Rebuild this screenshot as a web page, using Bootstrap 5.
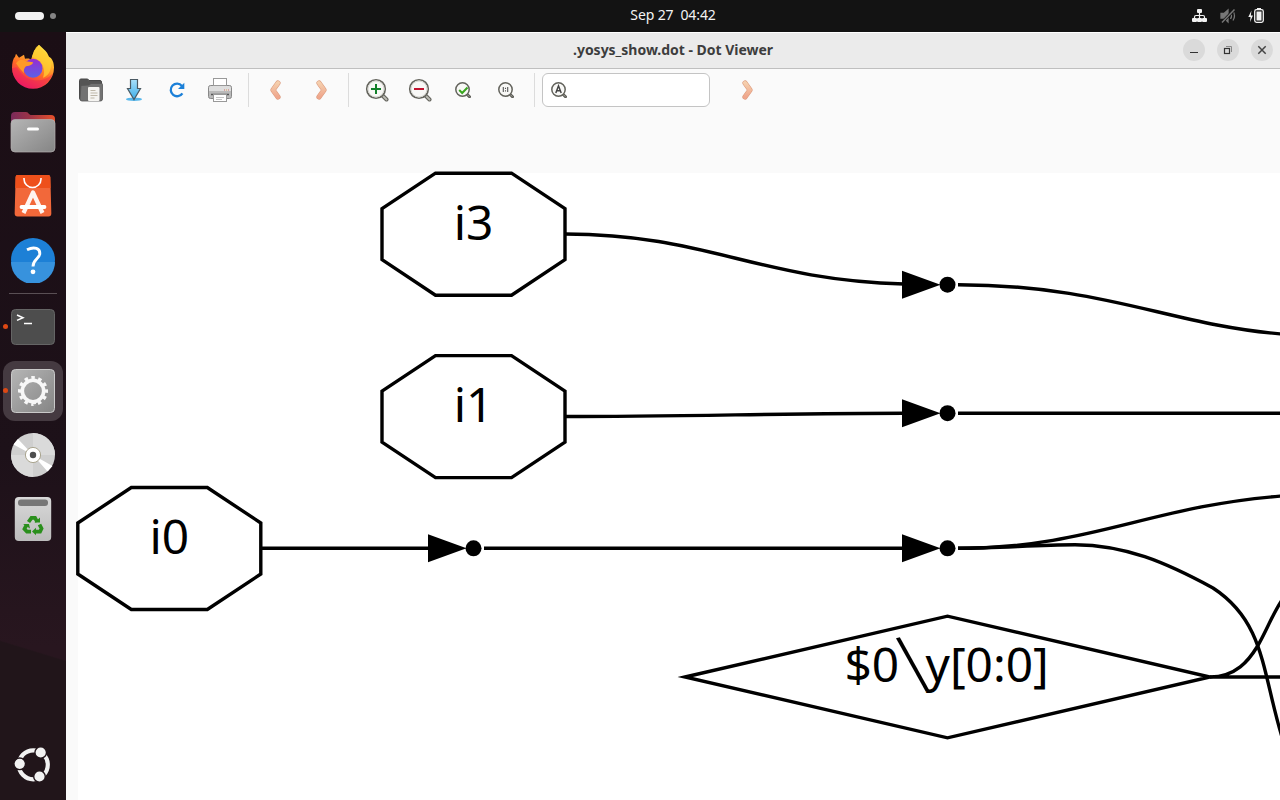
<!DOCTYPE html>
<html lang="en">
<head>
<meta charset="utf-8">
<title>.yosys_show.dot - Dot Viewer</title>
<link href="https://cdn.jsdelivr.net/npm/bootstrap@5.3.0/dist/css/bootstrap.min.css" rel="stylesheet">
<style>
body{font-family:"Noto Sans","Open Sans",sans-serif;background:#fafafa}
svg{display:block;flex:none}
.topbar{height:32px;background:#131313;color:#f2f2f2;flex:none;display:grid;grid-template-columns:1fr auto 1fr}
.workspaces{padding-left:15px;gap:6px}
.clock{font-size:14px;letter-spacing:-.12px;white-space:pre;transform:translateX(33px);line-height:30px;height:32px}
.pill{width:29px;height:8px;background:#f2f2f2}
.pip{width:6px;height:6px;background:#858585}
.dock{width:66px;flex:none;padding-top:4px;background:linear-gradient(197deg,transparent 0 79.7%,#21151a 79.9%),linear-gradient(#1b0e15,#1d1119 55%,#28161f 80%)}
.dock-item{width:66px;height:64px;flex:none;position:relative}
.dock-item.active-app::before{content:"";position:absolute;left:3px;top:2px;width:60px;height:60px;border-radius:12px;background:#453a41}
.dock-item svg{position:relative}
.dock-item.running::after{content:"";position:absolute;left:3px;top:29px;width:5px;height:5px;border-radius:50%;background:#dd4814}
.dock-rule{height:3px;flex:none;margin:0 9px;padding-top:1px}
.dock-rule div{height:1px;background:#594f54}
.show-apps{margin-bottom:3px}
.titlebar{height:37px;flex:none;background:#ebebeb;border-top:1px solid #fff;border-bottom:1px solid #bfbfbf;display:grid;grid-template-columns:1fr auto 1fr}
.win-title{font-size:14px;font-weight:700;letter-spacing:-.02px;color:#3d3d3d;line-height:33px}
.win-controls{gap:12px;padding-right:7px;position:relative;top:-1px}
.win-btn{width:22px;height:22px;background:#dadada;border-radius:50%}
.toolbar{height:42px;flex:none;padding-left:3.5px}
.tool{width:43px;height:42px;flex:none}
.tool.nav-tool{width:45px}
.rule{width:1px;height:34px;background:#dcdcdc;flex:none}
.find{width:168px;height:34px;border:1px solid #c4c4c4;border-radius:6px;background:#fff;padding-left:8px}
.graph{margin:62px 0 0 12px;background:#fff;overflow:visible}
.graph text{font-family:"Noto Sans",sans-serif;font-size:47.800px}
.graph .slash{font-family:"Noto Sans CJK JP",sans-serif;font-size:60px}
</style>
</head>
<body class="vh-100 overflow-hidden d-flex flex-column">
<svg width="0" height="0" class="position-absolute">
<defs>
<linearGradient id="peach" x1="0" y1="0" x2="0" y2="1"><stop offset="0" stop-color="#f5cfad"/><stop offset="1" stop-color="#efa68c"/></linearGradient>
<linearGradient id="ff" x1=".8" y1="0" x2=".3" y2="1"><stop offset="0" stop-color="#fff44f"/><stop offset=".3" stop-color="#ffbd2f"/><stop offset=".6" stop-color="#ff6a25"/><stop offset="1" stop-color="#e9126b"/></linearGradient>
<linearGradient id="ffb" x1="0" y1="1" x2="0" y2="0"><stop offset="0" stop-color="#5a62e6"/><stop offset="1" stop-color="#9a2bd0"/></linearGradient>
<linearGradient id="fold" x1="0" x2="1"><stop offset="0" stop-color="#7a2a5a"/><stop offset=".4" stop-color="#9a3348"/><stop offset="1" stop-color="#e8502a"/></linearGradient>
<linearGradient id="gray" x1="0" y1="0" x2="1" y2="1"><stop offset="0" stop-color="#b5b5b5"/><stop offset="1" stop-color="#858585"/></linearGradient>
<linearGradient id="lite" x1="0" y1="0" x2="0" y2="1"><stop offset="0" stop-color="#d8d8d8"/><stop offset="1" stop-color="#bcbcbc"/></linearGradient>
<linearGradient id="sky" x1="0" y1="0" x2="0" y2="1"><stop offset="0" stop-color="#a9e0fa"/><stop offset="1" stop-color="#3daee9"/></linearGradient>
<g id="lens"><path d="M17 17l4.500 4.500" stroke="#63635c" stroke-width="4" stroke-linecap="round"/><path d="M17 17l4.500 4.500" stroke="#bcbcb4" stroke-width="1.800" stroke-linecap="round"/><circle cx="11" cy="11" r="9.300" fill="#f8f8f6" stroke="#63635c" stroke-width="1.600"/><circle cx="11" cy="11" r="8" fill="none" stroke="#d6d6d0"/></g>
<g id="slens"><path d="M11.700 12l2.800 2.800" stroke="#5e5e58" stroke-width="3" stroke-linecap="round"/><path d="M12 12.300l2.300 2.300" stroke="#a6a69e" stroke-width="1"/><circle cx="7.500" cy="7.500" r="6.700" fill="#f8f8f6" stroke="#63635c" stroke-width="1.500"/></g>
<g id="chev"><path d="M3 3l5 7-5 7" fill="none" stroke="#dc9a7c" stroke-width="5.200" stroke-linecap="round" stroke-linejoin="round"/><path d="M3 3l5 7-5 7" fill="none" stroke="url(#peach)" stroke-width="4" stroke-linecap="round" stroke-linejoin="round"/></g>
</defs></svg>

<header class="topbar align-items-center">
  <div class="workspaces d-flex align-items-center"><div class="pill rounded-pill"></div><div class="pip rounded-circle"></div></div>
  <div class="clock">Sep 27  04:42</div>
  <div class="d-flex align-items-center justify-content-end">
    <svg width="88" height="32" viewBox="1192 0 88 32"><g fill="#f2f2f2"><rect x="1197" y="9" width="5" height="4" rx="1"/><rect x="1192" y="18" width="5" height="4" rx="1"/><rect x="1197" y="18" width="5" height="4" rx="1"/><rect x="1202" y="18" width="5" height="4" rx="1"/></g><path d="M1199.500 13v5M1194.500 18v-1q0-1.500 1.500-1.500h7q1.500 0 1.500 1.500v1" fill="none" stroke="#f2f2f2" stroke-width="1.200"/>
    <g stroke="#777" fill="none" stroke-width="1.300"><path d="M1221 13.500h3l4-3.500v12l-4-4h-3z" fill="#777"/><path d="M1230.500 13q2 3 0 6M1233 11q3 5 0 9.500"/><path d="M1234.500 9.500l-12.500 13" stroke="#131313" stroke-width="3"/><path d="M1234.500 9.500l-12.500 13" stroke-width="1.500"/></g>
    <path d="M1251.500 10.500l-3.200 6.500h2.300l-.6 5 3-6.500h-2.200z" fill="#f2f2f2"/><rect x="1254.700" y="9.700" width="8.600" height="12.600" rx="1.800" fill="none" stroke="#f2f2f2" stroke-width="1.300"/><rect x="1257" y="8" width="4" height="2" fill="#f2f2f2"/><rect x="1256.500" y="11.500" width="5" height="9" fill="#f2f2f2"/></svg>
  </div>
</header>

<div class="d-flex flex-grow-1" style="min-height:0">
<nav class="dock d-flex flex-column">
  <div class="dock-item d-flex align-items-center justify-content-center"><svg width="46" height="46" viewBox="0 .7 46 46"><path d="M29 .5c3 3 6 5 8 8l2 4c3.500 2 5 6 5 11a21 21 0 0 1-42 0c0-5 1-9 3-11l1-3 3 4 5-3 1 4c4-1 5 0 6 1l3-9z" fill="url(#ff)"/><path d="M2 24a21 21 0 0 0 41 5c-8 9-26 12-36-6" fill="#f01c5e" opacity=".45"/><path d="M22 12l4-9 3-2.500c2 5 7 7 10 13 4 7 2 17-6 20 3-9 0-17-11-21z" fill="#ffcf33" opacity=".75"/><circle cx="23" cy="24" r="9.500" fill="url(#ffb)"/><path d="M6 19q4-6 10-2l7 1q0 3-7 4-3 3-2 7-5-5-8-10z" fill="#ff9a28"/></svg></div>
  <div class="dock-item d-flex align-items-center justify-content-center"><svg width="46" height="44"><path d="M1 28V6q0-4 4-4h11q2 0 3 2l1.500 1H41q4 0 4 4v14z" fill="url(#fold)"/><rect x="1" y="9.500" width="44" height="32.500" rx="4" fill="url(#gray)" stroke="#b5b0b0" stroke-width=".7"/><rect x="17" y="17.500" width="12" height="3" rx="1.500" fill="#fff"/></svg></div>
  <div class="dock-item d-flex align-items-center justify-content-center"><svg width="40" height="44"><path d="M4 1h32q2 0 2.200 2l1 37q0 3-3 3H4q-3 0-3-3L2 3q0-2 2-2z" transform="translate(.7 0) scale(.96 .99)" fill="#f2683a"/><path d="M4.500 1H35q2 0 2.200 2l.3 11H2.300L2.600 3q0-2 1.900-2z" fill="#ee501b"/><path d="M11 4v1a8.500 8.500 0 0 0 17 0V4" fill="none" stroke="#fff" stroke-width="1.600"/><path d="M10.500 39L20 18.500 29.500 39" fill="none" stroke="#fff3ef" stroke-width="4.200" stroke-linejoin="round"/><path d="M8.500 33h23" stroke="#fff" stroke-width="3.800" stroke-linecap="round"/></svg></div>
  <div class="dock-item d-flex align-items-center justify-content-center"><svg width="46" height="46"><circle cx="23" cy="23" r="22" fill="#1d80d6"/><path d="M1 25a22 22 0 0 0 44 0z" fill="#3792dd"/><path d="M17 12.800c7.500-3.800 13.500-1.300 12.700 4.500-.9 5-6.700 5.200-6.700 12.200" fill="none" stroke="#fff" stroke-width="2.900"/><circle cx="23" cy="34.800" r="2.400" fill="#fff"/></svg></div>
  <div class="dock-rule"><div></div></div>
  <div class="dock-item running d-flex align-items-center justify-content-center"><svg width="46" height="40"><rect x="1.500" y="2.500" width="43" height="35" rx="4" fill="#4d4d4d" stroke="#656565"/><path d="M7 8l6 2.700L7 13.400M14 16.500h8" fill="none" stroke="#fff" stroke-width="1.500"/></svg></div>
  <div class="dock-item running active-app d-flex align-items-center justify-content-center"><svg width="46" height="46"><rect x="1.500" y="1.500" width="43" height="43" rx="4" fill="url(#gray)" stroke="#c9c9c9"/><circle cx="23" cy="23" r="10.700" fill="none" stroke="#f7f7f7" stroke-width="3.600"/><circle cx="23" cy="23" r="13.400" fill="none" stroke="#f7f7f7" stroke-width="3.200" stroke-dasharray="3.500 3.515" pathLength="84.180" transform="rotate(-97 23 23)"/></svg></div>
  <div class="dock-item d-flex align-items-center justify-content-center"><svg width="46" height="46"><circle cx="23" cy="23" r="22" fill="#cfcfcf"/><path d="M23 23V1a22 22 0 0 1 22 22zM23 23v22A22 22 0 0 1 1 23z" fill="#dadada"/><path d="M23 23L3.500 12.500 8 7zM23 23l19.500 11-5 5.500z" fill="#fff"/><circle cx="23" cy="23" r="7.600" fill="#fff" stroke="#aaa58f"/><circle cx="23" cy="23" r="3.200" fill="#4e4e4e"/></svg></div>
  <div class="dock-item d-flex align-items-center justify-content-center"><svg width="38" height="46"><rect x=".8" y="1" width="36.400" height="44" rx="4" fill="url(#lite)"/><rect x="4" y="3.500" width="30" height="6.500" rx="3" fill="#777"/><g fill="none" stroke="#2a8f1c" stroke-width="3.800"><path d="M14.500 26l3-4.200h3.500l2.200 4M25.500 28.500l2 4-1.500 3.200h-5M17 35.700h-4l-2.500-2.700 2-4"/></g><path d="M20.500 26.500h5.500v-5zM22 31.800v7.500l-4-3.700zM9 28h6l1 4.500z" fill="#2a8f1c"/></svg></div>
  <div class="dock-item show-apps mt-auto d-flex align-items-center justify-content-center"><svg width="46" height="46" viewBox="10 742 46 46"><circle cx="33.300" cy="764.800" r="14.500" fill="none" stroke="#f2f2f2" stroke-width="4.200"/><g fill="#f2f2f2" stroke="#21151a" stroke-width="1.400"><circle cx="19.700" cy="763.800" r="5.800"/><circle cx="40.700" cy="752.500" r="5.800"/><circle cx="39.500" cy="776.500" r="5.800"/></g></svg></div>
</nav>

<main class="d-flex flex-column flex-grow-1" style="min-width:0">
  <div class="titlebar">
    <span></span><div class="win-title">.yosys_show.dot - Dot Viewer</div>
    <div class="win-controls d-flex align-items-center justify-content-end">
      <div class="win-btn"><svg width="22" height="22"><path d="M7 13.500h8" stroke="#333"/></svg></div>
      <div class="win-btn"><svg width="22" height="22" fill="none"><path d="M9 7.500h5.500v5.500" stroke="#888"/><rect x="7.500" y="9.500" width="5" height="5" stroke="#333" stroke-width="1.200"/></svg></div>
      <div class="win-btn"><svg width="22" height="22"><path d="M7.300 7.300l7.400 7.400M14.700 7.300l-7.400 7.400" stroke="#444" stroke-width="1.500"/></svg></div>
    </div>
  </div>
  <div class="toolbar d-flex align-items-center">
    <div class="tool d-flex align-items-center justify-content-center"><svg width="24" height="24"><path d="M.5 20V2.500q0-1.500 1.500-1.500h6q1.500 0 2 1.500h11q1.500 0 1.500 1.500v18H2.500q-2 0-2-2z" fill="#555" stroke="#484848"/><path d="M2 7.500L10 7l2-1.500h10.500q1 0 1 1V21q0 2-2 2H3q-2 0-2-2z" fill="#727272" stroke="#555" stroke-width=".8"/><rect x="9" y="9" width="11.500" height="14" rx="1" fill="#f5f4f1"/><path d="M11.500 12.500h5M11.500 15h7M11.500 17.500h7M11.500 20h4" stroke="#bfb8a9"/></svg></div>
    <div class="tool d-flex align-items-center justify-content-center"><svg width="24" height="24"><ellipse cx="12" cy="21.300" rx="8" ry="1.700" fill="#59b8ec"/><path d="M8.500 1.500h7v9h3L12 21.500 5.500 10.500h3z" fill="url(#sky)" stroke="#4b5a63" stroke-width="1.200"/></svg></div>
    <div class="tool d-flex align-items-center justify-content-center"><svg width="16" height="16"><path d="M13.400 11.300a6.300 6.300 0 1 1-.5-7.400" fill="none" stroke="#1c80d8" stroke-width="2.300"/><path d="M15.300 .8v6.200H9z" fill="#1c80d8"/></svg></div>
    <div class="tool d-flex align-items-center justify-content-center"><svg width="24" height="24"><rect x=".5" y="7.500" width="23" height="13" rx="2" fill="#bababa" stroke="#888"/><path d="M1 13h22v-3q0-2-2-2H3Q1 8 1 10z" fill="#dedede"/><rect x="5.500" y=".5" width="13" height="7" fill="#fff" stroke="#999"/><path d="M3 16.500h18" stroke="#555" stroke-width="1.500"/><rect x="5.500" y="16.500" width="13" height="7" fill="#fff" stroke="#999"/><path d="M8 19.500h8M8 21.500h6" stroke="#c4c4c4"/><path d="M16 12h1M20 12h1" stroke="#d36b65"/><path d="M18 12h1" stroke="#d9a050"/></svg></div>
    <div class="rule" style="margin-left:6.5px"></div>
    <div class="tool nav-tool d-flex align-items-center justify-content-center" style="margin-left:4px"><svg width="11" height="20" style="transform:scaleX(-1)"><use href="#chev"/></svg></div>
    <div class="tool nav-tool d-flex align-items-center justify-content-center" style="margin-left:1px"><svg width="11" height="20"><use href="#chev"/></svg></div>
    <div class="rule" style="margin-left:4px"></div>
    <div class="tool d-flex align-items-center justify-content-center" style="margin-left:6px"><svg width="24" height="24"><use href="#lens"/><path d="M11 6v10M6 11h10" stroke="#13812a" stroke-width="2"/></svg></div>
    <div class="tool d-flex align-items-center justify-content-center"><svg width="24" height="24"><use href="#lens"/><path d="M6 11h10" stroke="#c3122f" stroke-width="2"/></svg></div>
    <div class="tool d-flex align-items-center justify-content-center"><svg width="16" height="16"><use href="#slens"/><path d="M4.200 8l3 3L12.500 5.500" fill="none" stroke="#3aa61f" stroke-width="2"/></svg></div>
    <div class="tool d-flex align-items-center justify-content-center"><svg width="16" height="16"><use href="#slens"/><path d="M5.300 5v5M9.700 5v5M7.500 5.700v1.200M7.500 8.300v1.200" stroke="#555" stroke-width="1.100"/></svg></div>
    <div class="rule" style="margin-left:7px"></div>
    <div class="find d-flex align-items-center" style="margin-left:7px"><svg width="16" height="16"><use href="#slens"/><path d="M4.800 11l2.700-7.200L10.200 11M5.600 8.700h3.800" fill="none" stroke="#444" stroke-width="1.500"/></svg></div>
    <svg width="11" height="20" style="margin-left:32px"><use href="#chev"/></svg>
  </div>
  <svg class="graph" width="1202" height="627" viewBox="78 173 1202 627">
    <defs>
      <path id="oct" d="M435.500 173H511.500L565 208.500V259.500L511.500 295H435.500L382 259.500V208.500Z"/>
      <g id="dot"><path d="M-45.500-14L-7 0-45.500 14Z" fill="#000" stroke="none"/><circle r="8" fill="#000" stroke="none"/></g>
    </defs>
    <g fill="none" stroke="#000" stroke-width="3.400" stroke-miterlimit="10">
      <use href="#oct" y=".2"/><use href="#oct" y="182.600"/><use href="#oct" x="-304.200" y="314.500"/>
      <path d="M685 677L947.500 616.200 1210 677 947.500 737.800Z"/>
      <path d="M565 234C706 234 758 280 904 284"/>
      <path d="M958 284.700C1105 285 1170 325 1282 334"/>
      <path d="M565 416.500C680 416.500 790 413.200 904 413.200M958 413.200H1282"/>
      <path d="M261 548.300H430M484 548.300H904"/>
      <path d="M958 548.300C1090 548.300 1150 506 1282 496"/>
      <path d="M958 548.300C1000 548.300 1035 544.700 1075 544.700C1125 545 1165 562 1213 588C1265 622 1262 672 1282 737"/>
      <path d="M1210 677H1282M1210 677C1236 677 1249 660 1257 647C1266 632 1272 615 1282 600"/>
      <use href="#dot" x="947.500" y="284.700"/><use href="#dot" x="947.500" y="413.200"/><use href="#dot" x="473.500" y="548.300"/><use href="#dot" x="947.500" y="548.300"/>
    </g>
    <g text-anchor="middle"><text x="473.500" y="239.500">i3</text><text x="473.500" y="422">i1</text><text x="169.300" y="554">i0</text></g>
    <text x="844.500" y="682">$0<tspan class="slash" x="905" y="685" rotate="-12">\</tspan><tspan x="925.500" y="682">y[0:0]</tspan></text>
  </svg>
</main>
</div>
<script src="https://cdn.jsdelivr.net/npm/bootstrap@5.3.0/dist/js/bootstrap.bundle.min.js"></script>
</body>
</html>
